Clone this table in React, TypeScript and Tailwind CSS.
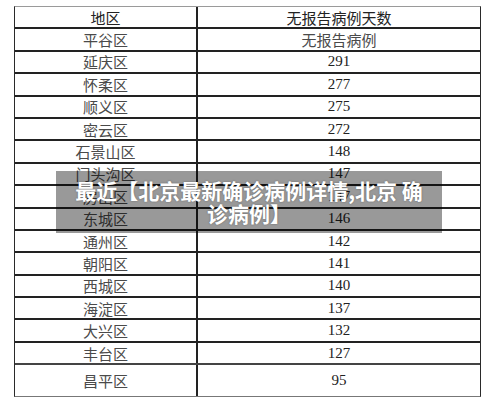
import React from "react";

const rows: [string, string][] = [
  ["平谷区", "无报告病例"],
  ["延庆区", "291"],
  ["怀柔区", "277"],
  ["顺义区", "275"],
  ["密云区", "272"],
  ["石景山区", "148"],
  ["门头沟区", "147"],
  ["房山区", "147"],
  ["东城区", "146"],
  ["通州区", "142"],
  ["朝阳区", "141"],
  ["西城区", "140"],
  ["海淀区", "137"],
  ["大兴区", "132"],
  ["丰台区", "127"],
];

const cjk = { fontFamily: '"Noto Sans CJK SC", "Noto Sans", sans-serif' };
const serif = { fontFamily: '"Liberation Serif", "Noto Sans CJK SC", serif' };

export default function App() {
  return (
    <div className="relative w-[500px] h-[406px] bg-white overflow-hidden">
      <div className="pt-[6px] pl-[14px]">
        <div className="w-[467px] border-t border-t-[#9a9a9a] border-l border-r border-l-[#2a2a2a] border-r-[#2a2a2a] border-b border-b-[#777]">
          <div className="flex h-[22.4px] border-b-2 border-b-[#222]">
            <div className="w-[183px] border-r-2 border-r-[#222] flex items-center justify-center text-[15px] text-[#222] leading-none" style={cjk}>
              地区
            </div>
            <div className="flex-1 flex items-center justify-center text-[15px] text-[#222] leading-none" style={cjk}>
              无报告病例天数
            </div>
          </div>
          {rows.map(([a, b], i) => (
            <div
              key={i}
              className={
                i === rows.length - 1
                  ? "flex h-[22.4px] border-b-2 border-b-[#444]"
                  : "flex h-[22.4px] border-b-2 border-b-[#222]"
              }
            >
              <div className="w-[183px] border-r-2 border-r-[#222] flex items-center justify-center text-[15px] text-[#4a4a4a] leading-none" style={cjk}>
                {a}
              </div>
              <div
                className={
                  i === 0
                    ? "flex-1 flex items-center justify-center text-[15px] text-[#4a4a4a] leading-none"
                    : "flex-1 flex items-center justify-center text-[15px] text-[#222] leading-none"
                }
                style={i === 0 ? cjk : serif}
              >
                {b}
              </div>
            </div>
          ))}
          <div className="flex h-[31px]">
            <div className="w-[183px] border-r-2 border-r-[#222] flex items-center justify-center text-[15px] text-[#4a4a4a] leading-none" style={cjk}>
              昌平区
            </div>
            <div className="flex-1 flex items-center justify-center text-[15px] text-[#222] leading-none" style={serif}>
              95
            </div>
          </div>
        </div>
      </div>
      <div className="absolute left-[56px] top-[171px] w-[386px] h-[62px] bg-black/40 flex items-center justify-center px-[15px]">
        <p
          className="text-white font-bold text-[21px] leading-[23px] text-center [text-shadow:0_0_2px_rgba(0,0,0,0.35)]"
          style={cjk}
        >
          最近【北京最新确诊病例详情,北京 确诊病例】
        </p>
      </div>
    </div>
  );
}
